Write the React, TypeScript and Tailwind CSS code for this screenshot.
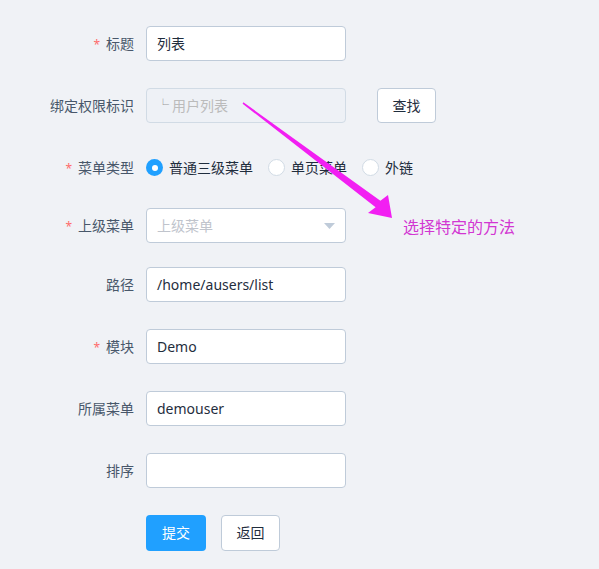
import React from "react"

const font = { fontFamily: '"Noto Sans", "Noto Sans CJK SC", sans-serif' }

function Label({ text, required }: { text: string; required?: boolean }) {
  return (
    <div className="w-[146px] shrink-0 pr-3 text-right text-sm text-[#48576a]">
      {required && <span className="mr-[6px] text-xs text-[#ff6b6b]">*</span>}
      {text}
    </div>
  )
}

function TextInput({ value }: { value: string }) {
  return (
    <div className="flex h-[35px] w-[200px] items-center rounded border border-[#bfcbd9] bg-white px-[10px] text-sm text-[#1f2d3d]">
      {value}
    </div>
  )
}

function Radio({ label, checked }: { label: string; checked?: boolean }) {
  return (
    <div className="mr-[15px] flex items-center">
      {checked ? (
        <span className="flex h-[17px] w-[17px] items-center justify-center rounded-full bg-[#20a0ff]">
          <span className="h-[6px] w-[6px] rounded-full bg-white" />
        </span>
      ) : (
        <span className="h-[17px] w-[17px] rounded-full border border-[#d1dbe5] bg-white" />
      )}
      <span className="ml-[6px] text-sm text-[#1f2d3d]">{label}</span>
    </div>
  )
}

export default function App() {
  return (
    <div className="relative h-[569px] w-[599px] overflow-hidden bg-[#f0f2f6] pt-[26px]" style={font}>
      {/* 标题 */}
      <div className="mb-[27px] flex items-center">
        <Label text="标题" required />
        <TextInput value="列表" />
      </div>

      {/* 绑定权限标识 */}
      <div className="mb-[27px] flex items-center">
        <Label text="绑定权限标识" />
        <div className="flex h-[35px] w-[200px] items-center rounded border border-[#d1dbe5] bg-[#eef1f6] px-[10px] text-sm text-[#bbbbbb]">
          <span className="mr-[3px] text-xs text-[#999]">└</span>用户列表
        </div>
        <button className="ml-[31px] h-[35px] w-[59px] rounded border border-[#bfcbd9] bg-white text-sm text-[#1f2d3d]">
          查找
        </button>
      </div>

      {/* 菜单类型 */}
      <div className="mb-[23px] flex h-[35px] items-center">
        <Label text="菜单类型" required />
        <Radio label="普通三级菜单" checked />
        <Radio label="单页菜单" />
        <Radio label="外链" />
      </div>

      {/* 上级菜单 */}
      <div className="mb-[24px] flex items-center">
        <Label text="上级菜单" required />
        <div className="flex h-[35px] w-[200px] items-center justify-between rounded border border-[#bfcbd9] bg-white pl-[10px] pr-[10px] text-sm text-[#c0c4cc]">
          <span>上级菜单</span>
          <svg width="11" height="6" viewBox="0 0 11 6">
            <path d="M0 0 H11 L5.5 6 Z" fill="#bfcbd9" />
          </svg>
        </div>
        <span className="ml-[57px] mt-[3px] text-base text-[#d236d2]">选择特定的方法</span>
      </div>

      <div className="mb-[27px] flex items-center">
        <Label text="路径" />
        <TextInput value="/home/ausers/list" />
      </div>

      <div className="mb-[27px] flex items-center">
        <Label text="模块" required />
        <TextInput value="Demo" />
      </div>

      <div className="mb-[27px] flex items-center">
        <Label text="所属菜单" />
        <TextInput value="demouser" />
      </div>

      <div className="mb-[27px] flex items-center">
        <Label text="排序" />
        <TextInput value="" />
      </div>

      <div className="flex items-center pl-[146px]">
        <button className="h-[36px] w-[60px] rounded bg-[#20a0ff] text-sm text-white">提交</button>
        <button className="ml-[15px] h-[36px] w-[59px] rounded border border-[#bfcbd9] bg-white text-sm text-[#1f2d3d]">
          返回
        </button>
      </div>

      {/* annotation arrow */}
      <svg className="pointer-events-none absolute left-0 top-0" width="599" height="569">
        <polygon
          points="243.4,102.3 380.4,200.8 388,195 392,218 368,213 375.6,207.2 242.6,103.7"
          fill="#f21ff2"
        />
      </svg>
    </div>
  )
}
